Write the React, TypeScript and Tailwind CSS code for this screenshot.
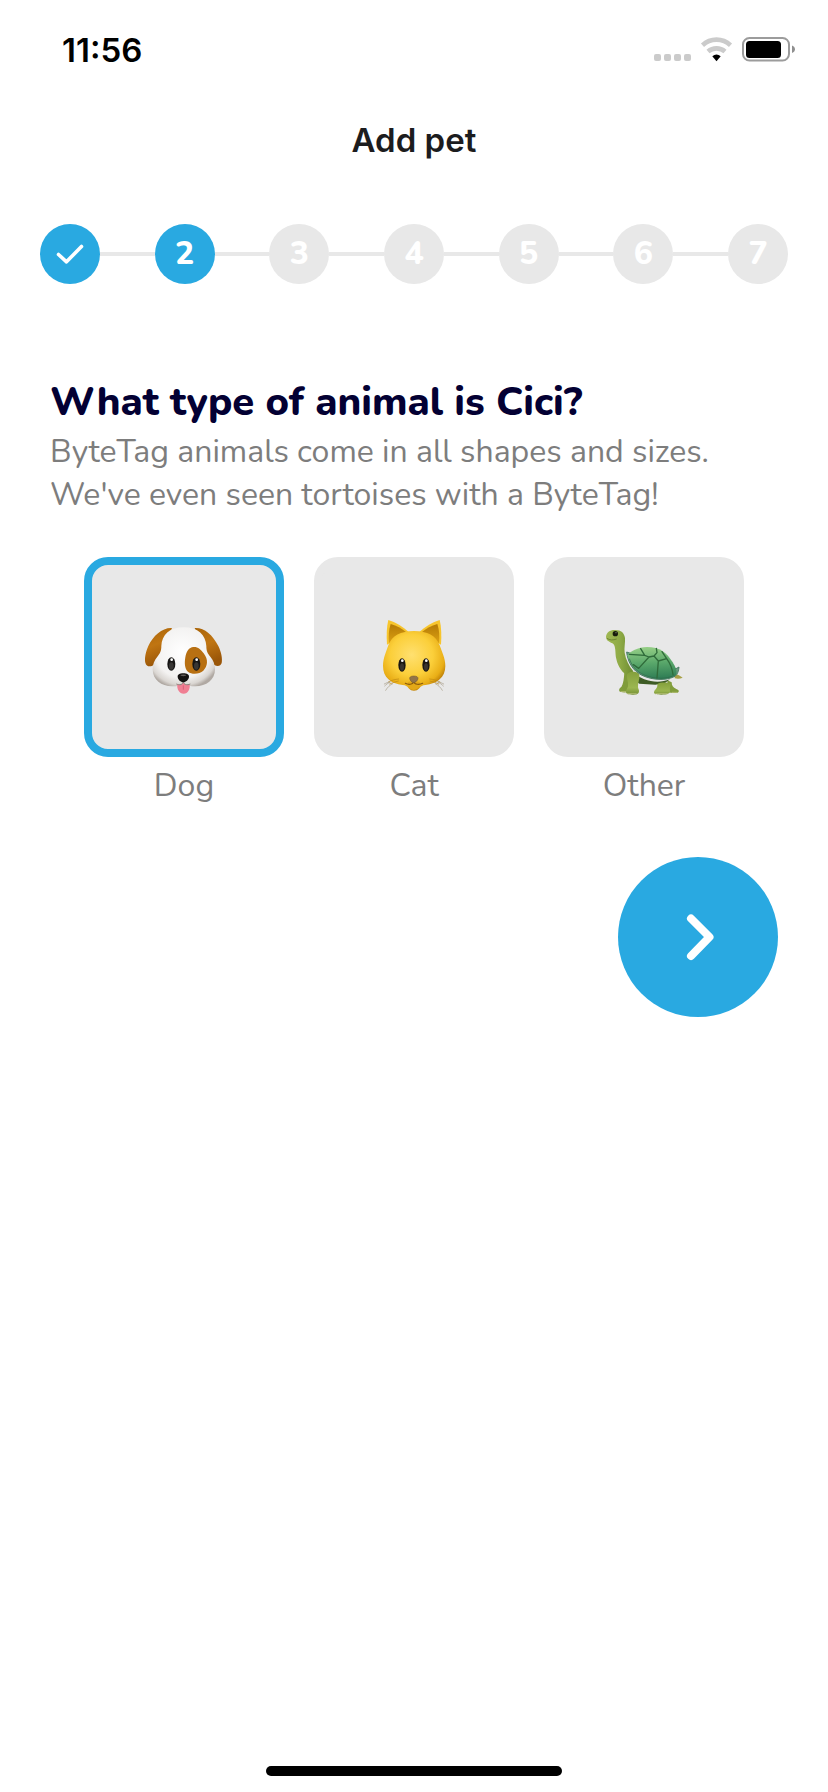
import React, { useState } from "react";

const steps = [1, 2, 3, 4, 5, 6, 7];
const currentStep = 2;

function StatusBar() {
  return (
    <div className="flex h-[100px] items-center justify-between pr-[33px] pl-[62px]">
      <span className="font-['Inter',sans-serif] text-[33px] leading-10 font-semibold text-black">
        11:56
      </span>
      <svg width="142" height="28" viewBox="0 0 142 28" aria-hidden="true">
        <g fill="#cbcbcb">
          <rect x="1" y="18" width="7" height="7" rx="2" />
          <rect x="11" y="18" width="7" height="7" rx="2" />
          <rect x="21" y="18" width="7" height="7" rx="2" />
          <rect x="31" y="18" width="7" height="7" rx="2" />
        </g>
        <g fill="none" stroke="#cbcbcb" strokeWidth="4.6">
          <path d="M49.5 9.2a20.5 20.5 0 0 1 28 0" />
          <path d="M55 15.5a13 13 0 0 1 17 0" />
        </g>
        <path d="M59.3 20.2a6.5 6.5 0 0 1 8.4 0l-4.2 5z" fill="#000" />
        <rect
          x="90"
          y="2"
          width="46"
          height="22.5"
          rx="6.5"
          fill="none"
          stroke="#9c9c9c"
          strokeWidth="2"
        />
        <rect x="93" y="5" width="35" height="17" rx="3.5" fill="#000" />
        <path d="M139 9.5c4 1.5 4 6 0 7.5z" fill="#8f8f8f" />
      </svg>
    </div>
  );
}

function Stepper() {
  return (
    <ol className="flex items-center px-10">
      {steps.map((step) => (
        <li
          key={step}
          className={step === 1 ? "flex items-center" : "flex flex-1 items-center"}
        >
          {step > 1 && <div className="h-1 flex-1 bg-[#e8e8e8]" />}
          <div
            className={`flex size-[60px] items-center justify-center rounded-full text-[32px] leading-10 font-extrabold text-white ${
              step <= currentStep ? "bg-[#29a9e1]" : "bg-[#e8e8e8]"
            }`}
          >
            {step < currentStep ? (
              <svg width="60" height="60" viewBox="0 0 60 60" aria-label="Done">
                <path
                  d="M18.5 30.5l8 7.3 15-15.3"
                  fill="none"
                  stroke="#fff"
                  strokeWidth="3.6"
                  strokeLinecap="round"
                  strokeLinejoin="round"
                />
              </svg>
            ) : (
              step
            )}
          </div>
        </li>
      ))}
    </ol>
  );
}

function DogIcon() {
  return (
    <svg className="size-20" viewBox="42 21 240 240" aria-hidden="true">
      <defs>
        <radialGradient id="dogFace" cx="0.48" cy="0.42" r="0.62">
          <stop offset="0" stopColor="#fff" />
          <stop offset="0.7" stopColor="#f3f2f1" />
          <stop offset="0.9" stopColor="#dad6d2" />
          <stop offset="1" stopColor="#b0a9a3" />
        </radialGradient>
        <linearGradient id="dogEar" x1="0" y1="0" x2="0.3" y2="1">
          <stop offset="0" stopColor="#a96408" />
          <stop offset="0.5" stopColor="#c07512" />
          <stop offset="1" stopColor="#9a5608" />
        </linearGradient>
      </defs>
      <path
        d="M126 54C98 52 70 76 55 108c-8 17-12 38-9 50 3 11 12 13 21 9 12-5 20-20 29-37z"
        fill="url(#dogEar)"
      />
      <path
        d="M194 54c28-2 54 20 71 54 9 18 13 40 10 51-3 10-13 11-22 6-12-7-19-18-26-35z"
        fill="url(#dogEar)"
      />
      <path
        d="M161 52c-44 0-65 24-67 56 0 15-4 22-12 32-9 11-14 23-14 38 0 32 26 51 58 51 16 0 24-5 35-5s20 5 35 5c33 0 59-19 59-51 0-15-5-27-14-38-8-10-12-17-12-32-2-32-24-56-68-56z"
        fill="url(#dogFace)"
      />
      <path
        d="M190 111c14-1 22 7 31 19 15 19 12 39-1 52-11 10-33 13-46 3-10-8-11-26-8-43 3-18 11-30 24-31z"
        fill="#b87012"
      />
      <ellipse cx="124" cy="162" rx="12" ry="20" fill="#171615" />
      <ellipse cx="199" cy="162" rx="12" ry="20" fill="#171615" />
      <ellipse cx="124" cy="168" rx="7" ry="11" fill="#383634" />
      <ellipse cx="199" cy="168" rx="7" ry="11" fill="#383634" />
      <circle cx="125" cy="149" r="4" fill="#fff" />
      <circle cx="200" cy="149" r="4" fill="#fff" />
      <path
        d="M142 222c8 5 12 1 18-4 6 5 11 9 19 4 2 16-5 29-18 29s-21-13-19-29z"
        fill="#f07f93"
      />
      <path d="M160 226v13" stroke="#d9607a" strokeWidth="3" />
      <path
        d="M160 213c0 12-12 13-21 9M160 213c0 12 12 13 21 9"
        fill="none"
        stroke="#8b827d"
        strokeWidth="3"
      />
      <path
        d="M160 190c11 0 18 4 17 11-1 8-9 16-17 16s-16-8-17-16c-1-7 6-11 17-11z"
        fill="#141211"
      />
      <ellipse cx="160" cy="196" rx="9" ry="2.5" fill="#625e5b" />
    </svg>
  );
}

function CatIcon() {
  return (
    <svg className="size-20" viewBox="42 36 240 240" aria-hidden="true">
      <defs>
        <radialGradient id="catFace" cx="0.46" cy="0.4" r="0.62">
          <stop offset="0" stopColor="#ffe070" />
          <stop offset="0.55" stopColor="#fbcf3a" />
          <stop offset="0.85" stopColor="#e9ae16" />
          <stop offset="1" stopColor="#b97b06" />
        </radialGradient>
        <linearGradient id="catEar" x1="0" y1="0" x2="0" y2="1">
          <stop offset="0" stopColor="#b47a05" />
          <stop offset="1" stopColor="#dba013" />
        </linearGradient>
      </defs>
      <path d="M85 45c-5 20-6 46-4 74l66-37c-19-18-40-31-62-37z" fill="#f7c52d" />
      <path d="M239 45c5 20 6 46 4 74l-66-37c19-18 40-31 62-37z" fill="#f7c52d" />
      <path d="M92 57c-6 17-7 37-5 58l51-34c-13-11-28-19-46-24z" fill="url(#catEar)" />
      <path d="M232 57c6 17 7 37 5 58l-51-34c13-11 28-19 46-24z" fill="url(#catEar)" />
      <path
        d="M162 78c-40 0-67 14-77 43-6 18-16 39-16 62 0 35 24 53 59 57 9 1 13 3 18 10 8 10 24 10 32 0 5-7 9-9 18-10 35-4 60-22 60-57 0-23-11-44-17-62-10-29-37-43-77-43z"
        fill="url(#catFace)"
      />
      <path
        d="M145 241c-7-14 5-12 16-11 11-1 24-3 17 11-3 9-9 14-17 14s-14-5-16-14z"
        fill="#e3a818"
      />
      <path
        d="M161 230c-2 9-16 10-25 5M161 230c2 9 17 10 27 5"
        fill="none"
        stroke="#8c5b08"
        strokeWidth="3.5"
        strokeLinecap="round"
      />
      <ellipse cx="126" cy="180" rx="11" ry="20" fill="#1a1713" />
      <ellipse cx="198" cy="180" rx="11" ry="20" fill="#1a1713" />
      <ellipse cx="126" cy="186" rx="6" ry="11" fill="#38342f" />
      <ellipse cx="198" cy="186" rx="6" ry="11" fill="#38342f" />
      <circle cx="127" cy="167" r="4" fill="#fff" />
      <circle cx="199" cy="167" r="4" fill="#fff" />
      <path
        d="M161 213c9 0 14 3 13 8-1 6-8 12-13 12s-11-6-12-12c-1-5 4-8 12-8z"
        fill="#927448"
        stroke="#6f552e"
        strokeWidth="1.5"
      />
      <g fill="none" strokeLinecap="round" strokeWidth="2">
        <path
          d="M116 222c-12 1-22 4-31 9M115 228c-9 2-17 5-26 9M209 222c12 1 22 4 31 9M210 228c9 2 17 5 26 9"
          stroke="#bd8613"
        />
        <path
          d="M90 232c-6 2-11 6-16 11M98 236c-8 4-16 11-21 20M90 231c-6 0-11 3-17 6M234 232c6 2 11 6 16 11M226 236c8 4 16 11 21 20M234 231c6 0 11 3 17 6"
          stroke="#a69c86"
        />
      </g>
    </svg>
  );
}

function TurtleIcon() {
  return (
    <svg className="size-20" viewBox="42 6 240 240" aria-hidden="true">
      <defs>
        <linearGradient id="shell" x1="0.4" y1="0" x2="0.5" y2="1">
          <stop offset="0" stopColor="#96cf86" />
          <stop offset="0.5" stopColor="#5aa86b" />
          <stop offset="1" stopColor="#2f7d55" />
        </linearGradient>
        <linearGradient id="skin" x1="0" y1="0" x2="1" y2="0">
          <stop offset="0" stopColor="#a0b853" />
          <stop offset="0.5" stopColor="#8fab46" />
          <stop offset="1" stopColor="#6c8b30" />
        </linearGradient>
        <linearGradient id="leg" x1="0" y1="0" x2="0" y2="1">
          <stop offset="0" stopColor="#84a03c" />
          <stop offset="0.7" stopColor="#9bb650" />
          <stop offset="1" stopColor="#748f35" />
        </linearGradient>
      </defs>
      <path d="M254 176c9 2 17 6 24 12-8 4-16 4-24 2z" fill="#a8a046" />
      <path
        d="M103 172c-1 19-3 35-9 44-5 3-8 7-6 13 6 4 20 4 30 1l9-55zM232 196l13 6c0 10 4 16 14 20 8 3 10 8 4 11-8 2-20 1-30-1z"
        fill="#809c3b"
      />
      <path d="M128 172c30 26 74 36 112 21l-16 12-28 4-48-3-20-14z" fill="#3e5c25" />
      <path
        d="M48 65c1-12 11-20 26-20 18-1 29 8 31 24 1 16-3 29-1 44 3 20 13 40 26 56l-14 16c-19-12-32-29-37-53-4-17-1-31-7-43-4-5-10-5-16-10-6-4-8-8-8-14z"
        fill="url(#skin)"
      />
      <path
        d="M110 111c3 26 14 48 34 63 27 19 79 27 111 10 8-6 11-17 12-28l-9 5z"
        fill="#6a9c80"
        stroke="#4b7d64"
        strokeWidth="3"
      />
      <path
        d="M112 121c9-13 31-24 59-25 39 0 59 17 77 46 8 13 15 27 10 38-30 20-80 12-108-6-20-13-32-32-38-53z"
        fill="url(#shell)"
      />
      <g
        fill="none"
        stroke="#2f6b3a"
        strokeWidth="4"
        strokeLinecap="round"
        strokeLinejoin="round"
      >
        <path d="M152 101l12 20 13 5 15-3 13 15 25-7M164 121l-46-3M192 123l9-10-2-13M177 126l-31 34M205 138l-4 51M230 131l-14-21M230 131c11 15 17 30 19 48M146 160l-16-11" />
      </g>
      <path
        d="M118 131c12 34 36 51 72 57 24 4 46 1 64-7"
        fill="none"
        stroke="#2d6a4b"
        strokeWidth="2"
      />
      <path
        d="M111 181c1-14 35-15 37 0 2 12-5 22-4 35 0 5 3 7 3 12 0 10-8 11-20 11-11 0-20-2-19-10 1-6 5-9 6-15 2-13-4-21-3-33z"
        fill="url(#leg)"
      />
      <path
        d="M202 207c11-7 33-5 41 0-3 6-4 13-3 21 0 8-8 11-26 11-14 0-22-1-22-7 0-8 12-11 10-25z"
        fill="url(#leg)"
      />
      <path
        d="M94 230h13M112 236h27M197 236h35M247 232h14"
        stroke="#b9c27c"
        strokeWidth="2.5"
        strokeLinecap="round"
      />
      <path d="M51 70c8 6 18 6 29 2" fill="none" stroke="#657b2c" strokeWidth="2.5" />
      <circle cx="76" cy="56" r="8" fill="#171b0c" />
      <circle cx="78" cy="53" r="2" fill="#7d8668" />
    </svg>
  );
}

const animals = [
  { name: "Dog", icon: <DogIcon /> },
  { name: "Cat", icon: <CatIcon /> },
  { name: "Other", icon: <TurtleIcon /> },
];

export default function App() {
  const [selected, setSelected] = useState("Dog");

  return (
    <div className="flex min-h-screen flex-col bg-white font-['Nunito','Open_Sans',sans-serif]">
      <StatusBar />
      <header className="flex h-20 items-center justify-center">
        <h1 className="font-['Inter',sans-serif] text-[33px] leading-10 font-semibold text-[#1c1c1e]">
          Add pet
        </h1>
      </header>
      <main className="flex flex-col pt-11">
        <Stepper />
        <section className="px-[50px] pt-[92px]">
          <h2 className="text-[40px] leading-[52px] font-extrabold text-[#030033]">
            What type of animal is Cici?
          </h2>
          <p className="mt-[2px] text-[32px] leading-[43px] font-normal text-[#7d7d7d]">
            ByteTag animals come in all shapes and sizes. We've even seen
            tortoises with a ByteTag!
          </p>
        </section>
        <fieldset className="mt-[41px] flex justify-center gap-[30px]">
          <legend className="sr-only" aria-label="Animal type" />
          {animals.map((a) => (
            <label key={a.name} className="flex cursor-pointer flex-col items-center">
              <input
                type="radio"
                name="animal"
                value={a.name}
                checked={selected === a.name}
                onChange={() => setSelected(a.name)}
                className="sr-only"
              />
              <span
                className={`flex size-[200px] items-center justify-center rounded-3xl border-8 bg-[#e8e8e8] ${
                  selected === a.name ? "border-[#29a9e1]" : "border-[#e8e8e8]"
                }`}
              >
                {a.icon}
              </span>
              <span className="mt-[7px] text-[32px] leading-[43px] font-normal text-[#7d7d7d]">
                {a.name}
              </span>
            </label>
          ))}
        </fieldset>
        <button
          aria-label="Next"
          className="mt-[50px] mr-[50px] flex size-40 cursor-pointer items-center justify-center self-end rounded-full bg-[#29a9e1]"
        >
          <svg width="60" height="60" viewBox="0 0 60 60" aria-hidden="true">
            <path
              d="M23 11.5l18.500 18.500-18.500 19"
              fill="none"
              stroke="#fff"
              strokeWidth="8"
              strokeLinecap="round"
              strokeLinejoin="round"
            />
          </svg>
        </button>
      </main>
      <div className="mx-auto mt-auto mb-4 h-[10px] w-[296px] rounded-full bg-black" />
    </div>
  );
}
